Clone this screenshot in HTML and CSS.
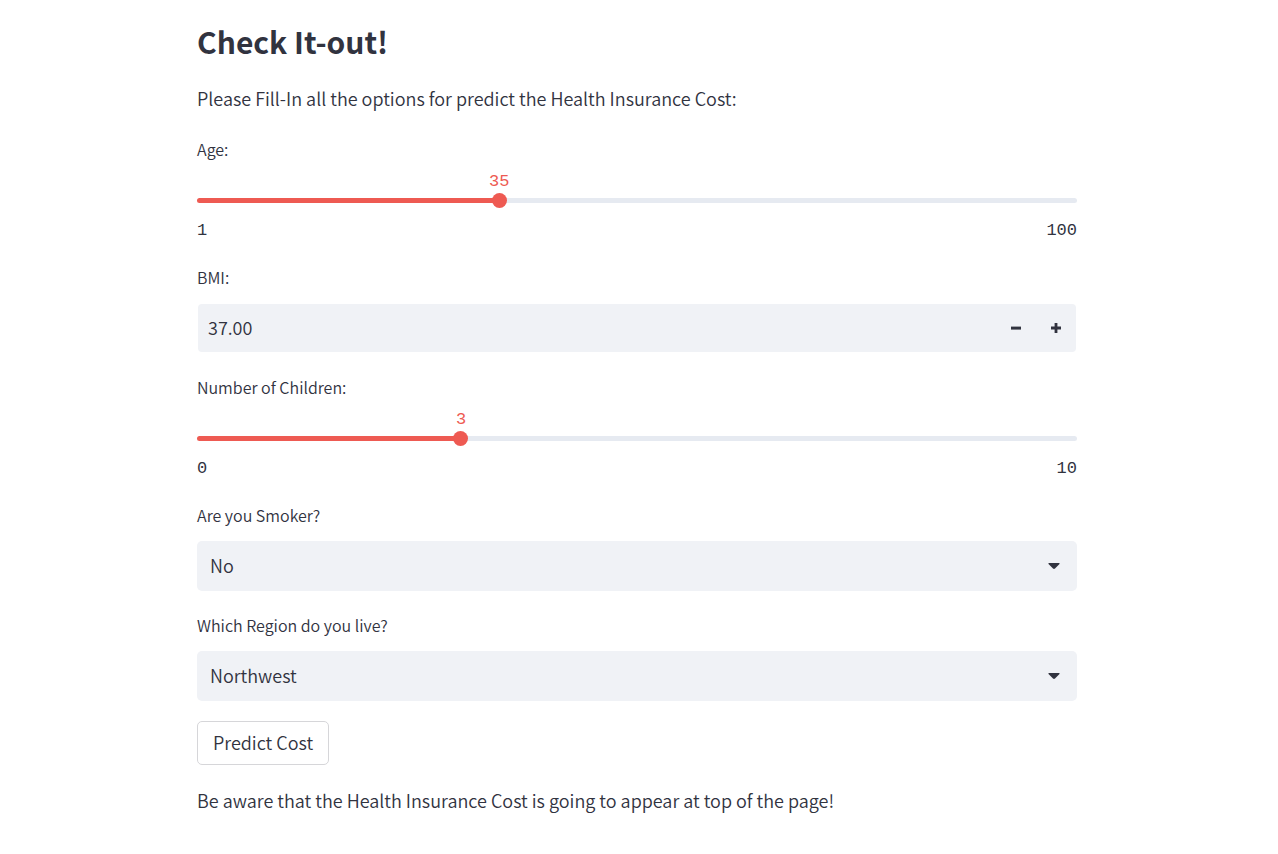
FILE: index.html
```html
<!DOCTYPE html>
<html lang="en">
<head>
<meta charset="utf-8">
<meta name="viewport" content="width=device-width, initial-scale=1">
<title>Health Insurance Cost</title>
<link rel="stylesheet" href="styles.css">
</head>
<body>
<main class="page">
  <h2 class="title">Check It-out!</h2>
  <p class="text">Please Fill-In all the options for predict the Health Insurance Cost:</p>
  <form class="form">
    <div class="field">
      <label class="label" for="age">Age:</label>
      <div class="slider" style="--position: 34.34%">
        <output class="slider-value" for="age">35</output>
        <div class="slider-control">
          <span class="slider-rail"></span>
          <input class="slider-input" id="age" type="range" min="1" max="100" value="35">
        </div>
        <div class="slider-limits"><span>1</span><span>100</span></div>
      </div>
    </div>
    <div class="field">
      <label class="label" for="bmi">BMI:</label>
      <div class="number">
        <input class="number-input" id="bmi" type="text" inputmode="decimal" value="37.00">
        <button class="step" type="button" aria-label="Decrease BMI">
          <svg width="20" height="20" viewBox="0 0 20 20" aria-hidden="true"><path d="M5 8.6h10v3H5z" fill="currentColor"/></svg>
        </button>
        <button class="step" type="button" aria-label="Increase BMI">
          <svg width="20" height="20" viewBox="0 0 20 20" aria-hidden="true"><path d="M5 8.6h3.6V5h2.8v3.6H15v2.8h-3.6V15H8.6v-3.6H5z" fill="currentColor"/></svg>
        </button>
      </div>
    </div>
    <div class="field">
      <label class="label" for="children">Number of Children:</label>
      <div class="slider" style="--position: 30%">
        <output class="slider-value" for="children">3</output>
        <div class="slider-control">
          <span class="slider-rail"></span>
          <input class="slider-input" id="children" type="range" min="0" max="10" value="3">
        </div>
        <div class="slider-limits"><span>0</span><span>10</span></div>
      </div>
    </div>
    <div class="field">
      <label class="label" for="smoker">Are you Smoker?</label>
      <div class="choice">
        <select class="select" id="smoker"><option>No</option><option>Yes</option></select>
        <svg class="arrow" width="12" height="6" viewBox="0 0 12 6" aria-hidden="true"><path d="M1 0h10q1 0 .5 1L7 5.500q-1 .9-2 0L.5 1Q0 0 1 0z" fill="currentColor"/></svg>
      </div>
    </div>
    <div class="field">
      <label class="label" for="region">Which Region do you live?</label>
      <div class="choice">
        <select class="select" id="region"><option>Northwest</option><option>Northeast</option><option>Southeast</option><option>Southwest</option></select>
        <svg class="arrow" width="12" height="6" viewBox="0 0 12 6" aria-hidden="true"><path d="M1 0h10q1 0 .5 1L7 5.500q-1 .9-2 0L.5 1Q0 0 1 0z" fill="currentColor"/></svg>
      </div>
    </div>
    <button class="submit" type="button">Predict Cost</button>
  </form>
  <p class="text">Be aware that the Health Insurance Cost is going to appear at top of the page!</p>
</main>
</body>
</html>
```

FILE: styles.css
```css
* {
  box-sizing: border-box;
}

body {
  margin: 0;
  padding: 19px 24px 20px 20px;
  background: #fff;
  color: #31333f;
  font-family: "Noto Sans CJK SC", "Noto Sans", sans-serif;
  font-size: 18px;
  font-weight: 350;
}

button,
input,
select {
  margin: 0;
  color: inherit;
  font: inherit;
}

.page,
.form {
  display: flex;
  flex-direction: column;
  gap: 20px;
}

.page {
  max-width: 880px;
  margin: 0 auto;
}

.title {
  margin: 0;
  font-size: 30px;
  font-weight: 600;
  line-height: 44px;
}

.text {
  margin: 0;
  padding-bottom: 2px;
  line-height: 30px;
}

.label {
  display: block;
  padding-bottom: 2px;
  font-size: 16px;
  line-height: 28px;
}

.slider {
  padding-top: 5px;
  font-family: "Liberation Mono", monospace;
  font-size: 17px;
}

.slider-value {
  display: block;
  width: max-content;
  margin-left: var(--position);
  transform: translateX(-50%);
  color: #ee5a52;
  line-height: 23px;
}

.slider-control {
  display: grid;
  align-items: center;
}

.slider-rail,
.slider-input {
  grid-area: 1 / 1;
}

.slider-rail {
  height: 5px;
  border-radius: 3px;
  background: linear-gradient(to right, #ee5a52 var(--position), #e6eaf1 var(--position));
}

.slider-input {
  height: 15px;
  margin: 0 -8px;
  appearance: none;
  background: transparent;
}

.slider-input::-webkit-slider-thumb {
  width: 15px;
  height: 15px;
  appearance: none;
  border-radius: 50%;
  background: #ee5a52;
}

.slider-limits {
  display: flex;
  justify-content: space-between;
  padding-top: 10px;
  line-height: 25px;
}

.number {
  display: flex;
  height: 50px;
  margin-top: 10px;
  border: 1px solid transparent;
  border-radius: 5px;
  background: #f0f2f6 padding-box;
}

.number-input {
  flex: 1;
  min-width: 0;
  padding: 0 10px 2px;
  border: 0;
  background: transparent;
}

.step {
  display: grid;
  place-items: center;
  width: 40px;
  padding: 0;
  border: 0;
  background: transparent;
}

.choice {
  display: grid;
  align-items: center;
  margin-top: 10px;
}

.select,
.arrow {
  grid-area: 1 / 1;
}

.select {
  width: 100%;
  height: 50px;
  padding: 0 40px 2px 13px;
  appearance: none;
  border: 0;
  border-radius: 5px;
  background: #f0f2f6;
}

.arrow {
  justify-self: end;
  margin-right: 17px;
  pointer-events: none;
}

.submit {
  align-self: flex-start;
  height: 44px;
  padding: 0 15px 2px;
  border: 1px solid #d6d6d9;
  border-radius: 5px;
  background: #fff;
}
```
